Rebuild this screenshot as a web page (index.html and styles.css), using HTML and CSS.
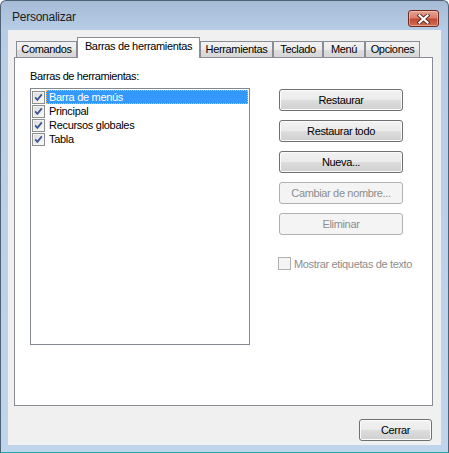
FILE: index.html
```html
<!DOCTYPE html>
<html lang="es">
<head>
  <meta charset="UTF-8">
  <title>Personalizar</title>
  <link rel="stylesheet" href="styles.css">
</head>
<body>

  <div class="window">
    <div class="titlebar">
      <span class="title">Personalizar</span>
      <button type="button" class="close-box" aria-label="Cerrar">
        <svg width="13" height="10" viewBox="0 0 13 10">
          <path d="M2.5 1.5 L10.5 8.5 M10.5 1.5 L2.5 8.5" stroke="#5a2a22" stroke-width="4" stroke-linecap="square"/>
          <path d="M2.5 1.5 L10.5 8.5 M10.5 1.5 L2.5 8.5" stroke="#ffffff" stroke-width="2.2" stroke-linecap="square"/>
        </svg>
      </button>
    </div>

    <div class="client">
      <div class="tabs">
        <div class="tab tab-comandos">Comandos</div>
        <div class="tab tab-barras active">Barras de herramientas</div>
        <div class="tab tab-herramientas">Herramientas</div>
        <div class="tab tab-teclado">Teclado</div>
        <div class="tab tab-menu">Menú</div>
        <div class="tab tab-opciones">Opciones</div>
      </div>

      <div class="panel">
        <div class="list-col">
          <div class="label">Barras de herramientas:</div>
          <div class="listbox">
            <div class="item selected">
              <span class="check"><svg width="13" height="13" viewBox="0 0 13 13"><use href="#chk"/></svg></span>
              <span class="item-text">Barra de menús</span>
            </div>
            <div class="item">
              <span class="check"><svg width="13" height="13" viewBox="0 0 13 13"><use href="#chk"/></svg></span>
              <span class="item-text">Principal</span>
            </div>
            <div class="item">
              <span class="check"><svg width="13" height="13" viewBox="0 0 13 13"><use href="#chk"/></svg></span>
              <span class="item-text">Recursos globales</span>
            </div>
            <div class="item">
              <span class="check"><svg width="13" height="13" viewBox="0 0 13 13"><use href="#chk"/></svg></span>
              <span class="item-text">Tabla</span>
            </div>
          </div>
        </div>

        <div class="button-col">
          <button type="button" class="btn">Restaurar</button>
          <button type="button" class="btn">Restaurar todo</button>
          <button type="button" class="btn">Nueva...</button>
          <button type="button" class="btn" disabled>Cambiar de nombre...</button>
          <button type="button" class="btn" disabled>Eliminar</button>
          <div class="option disabled">
            <span class="box"></span>
            <span>Mostrar etiquetas de texto</span>
          </div>
        </div>
      </div>

      <div class="footer">
        <button type="button" class="btn btn-close">Cerrar</button>
      </div>
    </div>
  </div>

  <svg width="0" height="0" class="defs">
    <defs>
      <linearGradient id="chkfill" x1="0" y1="0" x2="1" y2="1">
        <stop offset="0" stop-color="#dcdcdc"/>
        <stop offset="1" stop-color="#fafafa"/>
      </linearGradient>
      <g id="chk">
        <rect x="0.5" y="0.5" width="12" height="12" fill="#f4f4f4" stroke="#8e8f8f"/>
        <rect x="2" y="2" width="9" height="9" fill="url(#chkfill)"/>
        <path d="M3.2 6.3 L5.4 8.8 L9.8 3.4" fill="none" stroke="#3d5697" stroke-width="1.8"/>
      </g>
    </defs>
  </svg>

</body>
</html>
```

FILE: styles.css
```css
* {
  box-sizing: border-box;
}

body {
  margin: 0;
  font-family: 'Liberation Sans', Arial, sans-serif;
  font-size: 11px;
  color: #000;
  background: #fff;
}

.defs {
  position: absolute;
}

.window {
  width: 449px;
  height: 453px;
  display: flex;
  flex-direction: column;
  border: 1px solid #4f6275;
  border-bottom-color: #2aa5b0;
  border-radius: 6px 6px 0 0;
  background: linear-gradient(#a6bcd6 0px, #b7cde6 29px, #bfd5ec 100%);
}

.titlebar {
  height: 29px;
  display: flex;
  align-items: flex-start;
  justify-content: space-between;
  padding: 0 9px 0 11px;
}

.title {
  margin-top: 9px;
  font-size: 12px;
  line-height: 15px;
  letter-spacing: -0.25px;
  color: #1c1c1c;
}

.close-box {
  margin-top: 9px;
  width: 31px;
  height: 17px;
  padding: 0;
  border: 1px solid #6e2b22;
  border-radius: 3px;
  background: linear-gradient(#e7a594 0%, #d8806d 45%, #c24a35 55%, #cf6e55 100%);
  box-shadow: inset 0 0 0 1px rgba(255, 210, 200, 0.5);
  display: flex;
  align-items: center;
  justify-content: center;
}

.close-box svg {
  display: block;
}

.client {
  margin: 0 7px;
  height: 415px;
  background-color: #f0f0f0;
  padding: 7px 8px 4px 6px;
  display: flex;
  flex-direction: column;
}

.tabs {
  display: flex;
  align-items: flex-end;
  height: 20px;
  margin-left: 2px;
  position: relative;
  z-index: 1;
}

.tab {
  height: 16px;
  border: 1px solid #898c95;
  border-bottom: none;
  background: linear-gradient(#f2f2f2 0%, #ebebeb 50%, #dedede 51%, #d6d6d6 100%);
  text-align: center;
  line-height: 15px;
  letter-spacing: -0.35px;
  white-space: nowrap;
}

.tab + .tab {
  margin-left: 0;
}

.tab.active {
  height: 21px;
  margin-bottom: -1px;
  background: #fff;
  line-height: 17px;
}

.tab-comandos { width: 61px; }
.tab-barras { width: 123px; }
.tab-herramientas { width: 73px; }
.tab-teclado { width: 50px; }
.tab-menu { width: 42px; }
.tab-opciones { width: 55px; }

.tab-herramientas,
.tab-teclado,
.tab-menu,
.tab-opciones {
  margin-left: 1px;
}

.tab.tab-herramientas {
  margin-left: 0;
}

.panel {
  height: 349px;
  background-color: #fff;
  border: 1px solid #898c95;
  display: flex;
  align-items: flex-start;
  padding-left: 15px;
}

.list-col {
  padding-top: 12px;
  width: 220px;
}

.label {
  line-height: 13px;
  letter-spacing: -0.4px;
  margin-bottom: 5px;
}

.listbox {
  width: 220px;
  height: 257px;
  border: 1px solid #828790;
  padding: 1px 1px 0 1px;
}

.item {
  height: 14px;
  display: flex;
  align-items: center;
  letter-spacing: -0.3px;
}

.check {
  width: 13px;
  height: 13px;
  flex: none;
}

.check svg {
  display: block;
}

.item-text {
  margin-left: 1px;
  padding: 0 2px;
  height: 14px;
  line-height: 13px;
  border: 1px solid transparent;
}

.item.selected .item-text {
  flex: 1;
  background-color: #3399ff;
  color: #fff;
  border: 1px dotted #f7b36b;
}

.button-col {
  margin-left: 29px;
  padding-top: 31px;
  display: flex;
  flex-direction: column;
  gap: 9px;
}

.btn {
  width: 124px;
  height: 22px;
  padding: 0;
  font-family: 'Liberation Sans', Arial, sans-serif;
  font-size: 11px;
  letter-spacing: -0.35px;
  color: #000;
  border: 1px solid #707070;
  border-radius: 3px;
  background: linear-gradient(#f2f2f2 0%, #ebebeb 48%, #dddddd 52%, #cfcfcf 100%);
  box-shadow: inset 0 0 0 1px #fbfbfb;
}

.btn:disabled {
  color: #8d8d8d;
  border-color: #adb2b5;
  background: #f4f4f4;
  box-shadow: none;
}

.option {
  margin-top: 13px;
  margin-left: -1px;
  display: flex;
  align-items: center;
  height: 13px;
  letter-spacing: -0.35px;
}

.option .box {
  width: 13px;
  height: 13px;
  border: 1px solid #b1b1b1;
  background-color: #f4f4f4;
  margin-right: 3px;
}

.option.disabled {
  color: #8d8d8d;
}

.footer {
  margin-top: 13px;
  display: flex;
  justify-content: flex-end;
  padding-right: 1px;
}

.btn-close {
  width: 73px;
}
```
